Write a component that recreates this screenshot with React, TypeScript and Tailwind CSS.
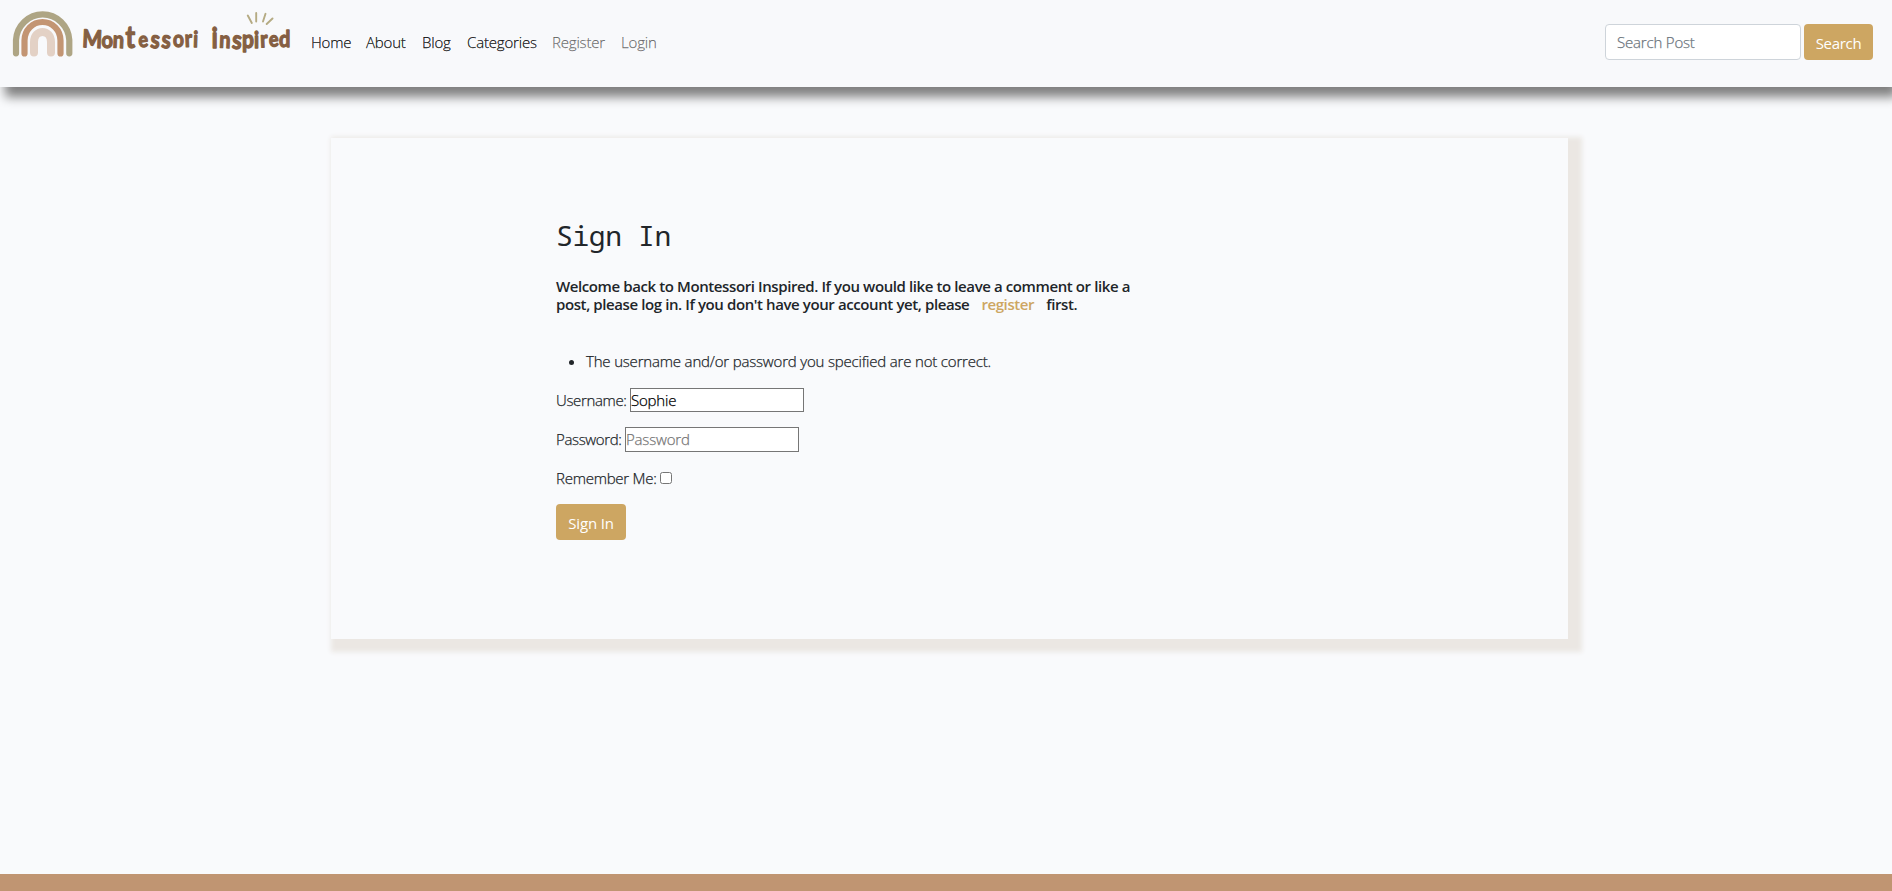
import React from "react";

type Glyph = { c: string; x: number; y: number; s: number; r?: number };

const firstWord: Glyph[] = [
  { c: "M", x: 82, y: 47, s: 21, r: 3 },
  { c: "o", x: 101.5, y: 47.5, s: 20 },
  { c: "n", x: 112.5, y: 47.5, s: 20, r: 3 },
  { c: "t", x: 125.5, y: 48, s: 26 },
  { c: "e", x: 139, y: 47.5, s: 18, r: -6 },
  { c: "s", x: 150, y: 47.5, s: 21, r: 6 },
  { c: "s", x: 161, y: 47.5, s: 21, r: 6 },
  { c: "o", x: 173, y: 47, s: 19 },
  { c: "r", x: 185, y: 47, s: 20, r: -3 },
  { c: "i", x: 193, y: 47, s: 19, r: 2 },
];

const secondWord: Glyph[] = [
  { c: "i", x: 211.5, y: 47.5, s: 25 },
  { c: "n", x: 219, y: 47.5, s: 20, r: 3 },
  { c: "s", x: 231.5, y: 48, s: 22, r: 6 },
  { c: "p", x: 242, y: 47.5, s: 21 },
  { c: "i", x: 254, y: 47.5, s: 20 },
  { c: "r", x: 260.5, y: 47.5, s: 20, r: -3 },
  { c: "e", x: 269.5, y: 47, s: 18, r: -6 },
  { c: "d", x: 279, y: 47, s: 20 },
];

function Word({ glyphs }: { glyphs: Glyph[] }) {
  return (
    <text>
      {glyphs.map((g, i) => (
        <tspan key={i} x={g.x} y={g.y} fontSize={g.s} rotate={g.r ?? 0}>{g.c}</tspan>
      ))}
    </text>
  );
}

function Logo() {
  return (
    <svg width="300" height="62" viewBox="0 0 300 62" fill="none" className="block shrink-0" aria-label="Montessori inspired">
      <g strokeLinecap="round">
        <path d="M16 53.500V40.500a26.700 26.700 0 0 1 53.300 0v13" transform="translate(0 -1.300) scale(1 1.020)" stroke="#aea584" strokeWidth="6.200" />
        <path d="M24.500 53.500V40.500a18 18.500 0 0 1 36 0v13" stroke="#c39573" strokeWidth="6.200" />
        <path d="M34 52.500V42c0-13.500 17-13.500 17 0v10.500" stroke="#e3d1c5" strokeWidth="8" />
        <path d="M247.800 15.500l4 7.500M256.200 13v8.500M265.500 13.800l-2.500 7.700M272.500 18.500l-5.800 5.500" stroke="#b5ab83" strokeWidth="1.900" />
      </g>
      <g transform="translate(0 -8) scale(1 1.170)" className="font-['Lato'] font-bold" fill="#855f42" stroke="#855f42" strokeWidth="1.1" strokeLinejoin="round">
        <Word glyphs={firstWord} />
        <Word glyphs={secondWord} />
      </g>
    </svg>
  );
}

const links = [
  { label: "Home", cls: "w-[55px] text-black/90" },
  { label: "About", cls: "w-[56px] text-black/90" },
  { label: "Blog", cls: "w-[45px] text-black/90" },
  { label: "Categories", cls: "w-[85px] text-black/90" },
  { label: "Register", cls: "w-[69px] text-black/50" },
  { label: "Login", cls: "w-[52px] text-black/50" },
];

export default function App() {
  return (
    <div className="flex h-[891px] flex-col overflow-hidden bg-[#f9fafc] font-['Open_Sans','Noto_Sans',sans-serif] text-[15px] font-light tracking-[-0.18px] text-[#212529] [-webkit-text-stroke:0.25px]">
      <header className="relative flex h-[87px] shrink-0 items-start bg-[#f8f9fb] shadow-[5px_10px_10px_0px_#808080]">
        <Logo />
        <nav className="ml-[11px] mt-[30px] flex whitespace-nowrap leading-6">
          {links.map((l) => (
            <a key={l.label} href="#" className={l.cls}>{l.label}</a>
          ))}
        </nav>
        <form className="ml-auto mr-[19px] mt-6 flex gap-[3px]">
          <input
            placeholder="Search Post"
            className="h-9 w-[196px] rounded border border-[#ced4da] bg-white px-[11px] placeholder:text-[#6c757d]"
          />
          <button type="button" className="h-9 w-[69px] rounded bg-[#cda662] pt-0.5 text-[15px] font-normal tracking-[-0.3px] text-white [-webkit-text-stroke:0px]">Search</button>
        </form>
      </header>

      <main className="ml-[331px] mt-[51px] h-[501px] w-[1237px] shrink-0 bg-[#f9fafc] pl-[225px] pt-20 shadow-[7px_6px_5px_7px_#ebe7e3]">
        <h1 className="font-['Noto_Sans_Mono','DejaVu_Sans_Mono',monospace] text-[28px] font-normal leading-[34px] tracking-[-0.4px] [-webkit-text-stroke:0px]">Sign In</h1>
        <h2 className="mt-[25px] whitespace-nowrap text-[15px] font-semibold leading-[18px] tracking-[-0.4px] [-webkit-text-stroke:0px]">
          Welcome back to Montessori Inspired. If you would like to leave a comment or like a
          <br />
          post, please log in. If you don't have your account yet, please
          <a href="#" className="mx-3 text-[#cda662]">register</a>
          first.
        </h2>
        <ul className="mt-9 list-disc pl-[30px] leading-6">
          <li>The username and/or password you specified are not correct.</li>
        </ul>
        <div className="mt-[14px] flex h-[25px] items-center">
          <label className="w-[74px] shrink-0 whitespace-nowrap pt-px tracking-[-0.35px]">Username:</label>
          <input defaultValue="Sophie" className="h-6 w-[174px] border border-[#767676] bg-white text-black" />
        </div>
        <div className="mt-[15px] flex h-[25px] items-center">
          <label className="w-[69px] shrink-0 whitespace-nowrap tracking-[-0.35px]">Password:</label>
          <input placeholder="Password" className="h-[25px] w-[174px] border border-[#767676] bg-white pb-px placeholder:text-[#757575]" />
        </div>
        <div className="mt-[14px] flex h-6 items-center">
          <label className="w-[104px] shrink-0 whitespace-nowrap tracking-[-0.25px]">Remember Me:</label>
          <input type="checkbox" className="size-3" />
        </div>
        <button type="button" className="mt-[14px] h-9 w-[70px] rounded bg-[#cda662] pt-0.5 text-[15px] font-normal text-white [-webkit-text-stroke:0px]">Sign In</button>
      </main>

      <footer className="mt-auto h-[17px] shrink-0 bg-[#c09572]" />
    </div>
  );
}
